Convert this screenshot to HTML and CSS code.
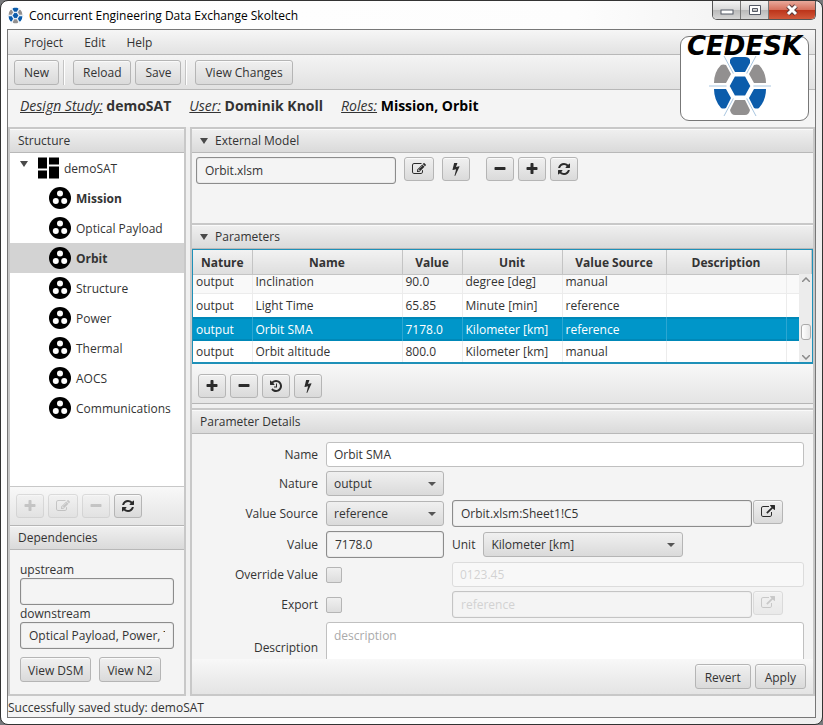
FILE: index.html
```html
<!DOCTYPE html>
<html lang="en">
<head>
    <meta charset="UTF-8">
    <meta name="viewport" content="width=device-width, initial-scale=1.0">
    <title>Concurrent Engineering Data Exchange Skoltech</title>
    <link rel="stylesheet" href="styles.css">
</head>
<body>
    <!-- shared icons -->
    <svg class="sprite" aria-hidden="true">
        <symbol id="plus" viewBox="0 0 1792 1792"><path d="M1600 736v192q0 40-28 68t-68 28h-416v416q0 40-28 68t-68 28h-192q-40 0-68-28t-28-68v-416h-416q-40 0-68-28t-28-68v-192q0-40 28-68t68-28h416v-416q0-40 28-68t68-28h192q40 0 68 28t28 68v416h416q40 0 68 28t28 68z"/></symbol>
        <symbol id="minus" viewBox="0 0 1792 1792"><path d="M1600 736v192q0 40-28 68t-68 28h-1216q-40 0-68-28t-28-68v-192q0-40 28-68t68-28h1216q40 0 68 28t28 68z"/></symbol>
        <symbol id="bolt" viewBox="0 0 1792 1792"><path d="M1333 566q18 20 7 44l-540 1157q-13 25-42 25-4 0-14-2-17-5-25.500-19t-4.500-30l197-808-406 101q-4 1-12 1-18 0-31-11-18-15-13-39l201-825q4-14 16-23t28-9h328q19 0 32 12.500t13 29.500q0 8-5 18l-171 463 396-98q8-2 12-2 19 0 34 15z"/></symbol>
        <symbol id="refresh" viewBox="0 0 1792 1792"><path d="M1639 1056q0 5-1 7-64 268-268 434.500t-478 166.500q-146 0-282.500-55t-243.500-157l-129 129q-19 19-45 19t-45-19-19-45v-448q0-26 19-45t45-19h448q26 0 45 19t19 45-19 45l-137 137q71 66 161 102t187 36q134 0 250-65t186-179q11-17 53-117 8-23 30-23h192q13 0 22.500 9.500t9.500 22.500zm25-800v448q0 26-19 45t-45 19h-448q-26 0-45-19t-19-45 19-45l138-138q-148-137-349-137-134 0-250 65t-186 179q-11 17-53 117-8 23-30 23h-199q-13 0-22.500-9.500t-9.500-22.500v-7q65-268 270-434.500t480-166.500q146 0 284 55.500t245 156.500l130-129q19-19 45-19t45 19 19 45z"/></symbol>
        <symbol id="history" viewBox="0 0 1792 1792"><path d="M1664 896q0 156-61 298t-164 245-245 164-298 61q-172 0-327-72.500t-264-204.500q-7-10-6.500-22.500t8.500-20.500l137-138q10-9 25-9 16 2 23 12 73 95 179 147t225 52q104 0 198.500-40.500t163.500-109.500 109.500-163.500 40.500-198.500-40.500-198.500-109.500-163.500-163.500-109.500-198.500-40.500q-98 0-188 35.500t-160 101.500l137 138q31 30 14 69-17 40-59 40h-448q-26 0-45-19t-19-45v-448q0-42 40-59 39-17 69 14l130 129q107-101 244.500-156.500t284.500-55.500q156 0 298 61t245 164 164 245 61 298zm-640-288v448q0 14-9 23t-23 9h-320q-14 0-23-9t-9-23v-64q0-14 9-23t23-9h224v-352q0-14 9-23t23-9h64q14 0 23 9t9 23z"/></symbol>
        <symbol id="edit" viewBox="0 0 1792 1792"><path d="M888 1184l116-116-152-152-116 116v56h96v96h56zm440-720q-16-16-33 1l-350 350q-17 17-1 33t33-1l350-350q17-17 1-33zm80 594v190q0 119-84.500 203.500t-203.500 84.500h-832q-119 0-203.500-84.500t-84.500-203.500v-832q0-119 84.500-203.500t203.500-84.500h832q63 0 117 25 15 7 18 23 3 17-9 29l-49 49q-14 14-32 8-23-6-45-6h-832q-66 0-113 47t-47 113v832q0 66 47 113t113 47h832q66 0 113-47t47-113v-126q0-13 9-22l64-64q15-15 35-7t20 29zm-96-738l288 288-672 672h-288v-288zm444 132l-92 92-288-288 92-92q28-28 68-28t68 28l152 152q28 28 28 68t-28 68z"/></symbol>
        <symbol id="link" viewBox="0 0 1792 1792"><path d="M1408 928v320q0 119-84.500 203.500t-203.500 84.500h-832q-119 0-203.500-84.500t-84.500-203.500v-832q0-119 84.500-203.500t203.500-84.500h704q14 0 23 9t9 23v64q0 14-9 23t-23 9h-704q-66 0-113 47t-47 113v832q0 66 47 113t113 47h832q66 0 113-47t47-113v-320q0-14 9-23t23-9h64q14 0 23 9t9 23zm384-864v512q0 26-19 45t-45 19-45-19l-176-176-652 652q-10 10-23 10t-23-10l-114-114q-10-10-10-23t10-23l652-652-176-176q-19-19-19-45t19-45 45-19h512q26 0 45 19t19 45z"/></symbol>
        <symbol id="node" viewBox="0 0 22 22"><circle cx="11" cy="11" r="11"/><g fill="#fff"><circle cx="11" cy="6.500" r="3"/><circle cx="6.800" cy="14" r="3"/><circle cx="15.200" cy="14" r="3"/></g></symbol>
        <symbol id="board" viewBox="0 0 21 21"><path d="M0 0h9v11H0zM11 0h10v7H11zM0 13h9v8H0zM11 9h10v12H11z"/></symbol>
        <symbol id="cells" viewBox="0 0 64 62">
            <path d="M16 1L48 61M48 1L16 61M1 31H63" stroke="#a9c6e0" stroke-width="1"/>
            <path d="M20 31L26 20H38L44 31L38 42H26Z" fill="#0b5cab" stroke="#fff" stroke-width="3"/>
            <path d="M22 5Q23 2 27 2H37Q41 2 42 5L42 8L37 17H27L22 8Z" fill="#0b5cab"/>
            <path d="M6 34H18L23 43L18 53Q15 54 13 53Q6 45 6 34ZM58 34H46L41 43L46 53Q49 54 51 53Q58 45 58 34Z" fill="#0b5cab"/>
            <path d="M6 28H18L23 19L18 10Q15 9 13 10Q6 17 6 28ZM58 28H46L41 19L46 10Q49 9 51 10Q58 17 58 28ZM22 55L27 45H37L42 55Q41 60 37 60H27Q23 60 22 55Z" fill="#929090"/>
        </symbol>
    </svg>

    <div class="window">
        <header class="titlebar">
            <svg class="app-icon"><use href="#cells"/></svg>
            <span class="title">Concurrent Engineering Data Exchange Skoltech</span>
            <div class="window-buttons">
                <button class="win-btn" aria-label="Minimize"><svg width="14" height="12"><rect x="1" y="6" width="12" height="4" fill="#fff" stroke="#555a66"/></svg></button>
                <button class="win-btn" aria-label="Maximize"><svg width="14" height="12"><path d="M1.500 1.500h11v9h-11zM4.500 4.500h5v3h-5z" fill="#fff" fill-rule="evenodd" stroke="#555a66"/></svg></button>
                <button class="win-btn close" aria-label="Close"><svg width="14" height="12"><path d="M3 2L11 10M11 2L3 10" stroke="#5a3a3a" stroke-width="5"/><path d="M3 2L11 10M11 2L3 10" stroke="#fff" stroke-width="3"/></svg></button>
            </div>
        </header>

        <div class="client">
            <nav class="menubar">
                <a href="#">Project</a>
                <a href="#">Edit</a>
                <a href="#">Help</a>
            </nav>
            <div class="toolbar">
                <button class="btn">New</button>
                <span class="separator"></span>
                <button class="btn">Reload</button>
                <button class="btn">Save</button>
                <span class="separator"></span>
                <button class="btn">View Changes</button>
            </div>
            <div class="study-info">
                <span><em>Design Study:</em> <b>demoSAT</b></span>
                <span><em>User:</em> <b>Dominik Knoll</b></span>
                <span class="roles"><em>Roles:</em> <b>Mission, Orbit</b></span>
            </div>
            <div class="logo">
                <span class="logo-text">CEDESK</span>
                <svg class="logo-cells"><use href="#cells"/></svg>
            </div>

            <main class="split">
                <aside class="side">
                    <h2 class="pane-title">Structure</h2>
                    <ul class="tree">
                        <li class="root"><span class="arrow"></span><svg><use href="#board"/></svg>demoSAT</li>
                        <li class="own"><svg><use href="#node"/></svg>Mission</li>
                        <li><svg><use href="#node"/></svg>Optical Payload</li>
                        <li class="own selected"><svg><use href="#node"/></svg>Orbit</li>
                        <li><svg><use href="#node"/></svg>Structure</li>
                        <li><svg><use href="#node"/></svg>Power</li>
                        <li><svg><use href="#node"/></svg>Thermal</li>
                        <li><svg><use href="#node"/></svg>AOCS</li>
                        <li><svg><use href="#node"/></svg>Communications</li>
                    </ul>
                    <div class="button-bar">
                        <button class="btn icon" aria-label="Add" disabled><svg><use href="#plus"/></svg></button>
                        <button class="btn icon large" aria-label="Rename" disabled><svg><use href="#edit"/></svg></button>
                        <button class="btn icon" aria-label="Remove" disabled><svg><use href="#minus"/></svg></button>
                        <button class="btn icon" aria-label="Refresh"><svg><use href="#refresh"/></svg></button>
                    </div>
                    <h2 class="pane-title">Dependencies</h2>
                    <div class="dependencies">
                        <label for="upstream">upstream</label>
                        <input class="readonly" id="upstream" type="text" readonly>
                        <label for="downstream">downstream</label>
                        <input class="readonly" id="downstream" type="text" value="Optical Payload, Power, Thermal" readonly>
                        <div class="view-buttons">
                            <button class="btn">View DSM</button>
                            <button class="btn">View N2</button>
                        </div>
                    </div>
                </aside>

                <section class="content">
                    <h2 class="pane-title"><span class="arrow"></span>External Model</h2>
                    <div class="external">
                        <input class="readonly" type="text" value="Orbit.xlsm" aria-label="External model file" readonly>
                        <button class="btn icon large" aria-label="Edit model"><svg><use href="#edit"/></svg></button>
                        <button class="btn icon" aria-label="Update from model"><svg><use href="#bolt"/></svg></button>
                        <div class="btn-group">
                            <button class="btn icon" aria-label="Detach model"><svg><use href="#minus"/></svg></button>
                            <button class="btn icon" aria-label="Attach model"><svg><use href="#plus"/></svg></button>
                            <button class="btn icon" aria-label="Reload model"><svg><use href="#refresh"/></svg></button>
                        </div>
                    </div>

                    <h2 class="pane-title"><span class="arrow"></span>Parameters</h2>
                    <div class="table-box">
                        <table class="parameters">
                            <colgroup>
                                <col class="c-nature"><col class="c-name"><col class="c-value"><col class="c-unit"><col class="c-source"><col class="c-desc"><col>
                            </colgroup>
                            <thead>
                                <tr><th>Nature</th><th>Name</th><th>Value</th><th>Unit</th><th>Value Source</th><th>Description</th><th></th></tr>
                            </thead>
                            <tbody>
                                <tr class="cut"><td>output</td><td>Inclination</td><td>90.0</td><td>degree [deg]</td><td>manual</td><td></td><td></td></tr>
                                <tr><td>output</td><td>Light Time</td><td>65.85</td><td>Minute [min]</td><td>reference</td><td></td><td></td></tr>
                                <tr class="selected"><td>output</td><td>Orbit SMA</td><td>7178.0</td><td>Kilometer [km]</td><td>reference</td><td></td><td></td></tr>
                                <tr><td>output</td><td>Orbit altitude</td><td>800.0</td><td>Kilometer [km]</td><td>manual</td><td></td><td></td></tr>
                            </tbody>
                        </table>
                        <div class="scrollbar">
                            <svg width="8" height="5"><path d="M0 5L4 1L8 5" fill="none" stroke="#8a8a8a" stroke-width="1.500"/></svg>
                            <span class="thumb"></span>
                            <svg width="8" height="5"><path d="M0 0L4 4L8 0" fill="none" stroke="#8a8a8a" stroke-width="1.500"/></svg>
                        </div>
                    </div>
                    <div class="button-bar">
                        <button class="btn icon" aria-label="Add parameter"><svg><use href="#plus"/></svg></button>
                        <button class="btn icon" aria-label="Delete parameter"><svg><use href="#minus"/></svg></button>
                        <button class="btn icon" aria-label="History"><svg><use href="#history"/></svg></button>
                        <button class="btn icon" aria-label="Recalculate"><svg><use href="#bolt"/></svg></button>
                    </div>
                    <div class="divider"></div>

                    <h2 class="pane-title">Parameter Details</h2>
                    <form class="details">
                        <label for="name">Name</label>
                        <input class="wide" id="name" type="text" value="Orbit SMA">

                        <label for="nature">Nature</label>
                        <span class="combo"><select id="nature"><option>output</option></select></span>
                        <span></span>

                        <label for="source">Value Source</label>
                        <span class="combo"><select id="source"><option>reference</option></select></span>
                        <div class="line">
                            <input class="readonly" type="text" value="Orbit.xlsm:Sheet1!C5" aria-label="Value reference" readonly>
                            <button class="btn icon large" type="button" aria-label="Choose value reference"><svg><use href="#link"/></svg></button>
                        </div>

                        <label for="value">Value</label>
                        <input class="readonly" id="value" type="text" value="7178.0" readonly>
                        <div class="line unit-line">
                            <label for="unit">Unit</label>
                            <span class="combo"><select id="unit"><option>Kilometer [km]</option></select></span>
                        </div>

                        <label for="override">Override Value</label>
                        <input id="override" type="checkbox">
                        <input type="text" placeholder="0123.45" aria-label="Override value" disabled>

                        <label for="export">Export</label>
                        <input id="export" type="checkbox">
                        <div class="line">
                            <input class="readonly" type="text" placeholder="reference" aria-label="Export reference" disabled>
                            <button class="btn icon large" type="button" aria-label="Choose export reference" disabled><svg><use href="#link"/></svg></button>
                        </div>

                        <label for="description">Description</label>
                        <textarea class="wide" id="description" placeholder="description"></textarea>
                    </form>
                    <div class="button-bar actions">
                        <button class="btn">Revert</button>
                        <button class="btn">Apply</button>
                    </div>
                </section>
            </main>
            <footer class="status">Successfully saved study: demoSAT</footer>
        </div>
    </div>
</body>
</html>
```

FILE: styles.css
```css
* {
    box-sizing: border-box;
}
body {
    margin: 0;
    background: #77797c;
    color: #333;
    font-family: "Open Sans", "Noto Sans", sans-serif;
    font-size: 12px;
    line-height: 17px;
}
button, input, select, textarea {
    font: inherit;
    color: inherit;
    margin: 0;
}
.sprite {
    display: none;
}

/* Window frame */
.window {
    display: flex;
    flex-direction: column;
    height: 100vh;
    padding: 0 6px 6px;
    border: 1px solid #333;
    border-radius: 8px;
    background: linear-gradient(to right, #fff, #fdfdfd 70%, #eee);
}
.titlebar {
    display: flex;
    align-items: center;
    height: 28px;
    flex: none;
    gap: 5px;
    color: #000;
}
.app-icon {
    width: 17px;
    height: 17px;
}
.title {
    flex: 1;
}
.window-buttons {
    display: flex;
    align-self: flex-start;
    height: 19px;
    border: 1px solid #555;
    border-top: 0;
    border-radius: 0 0 5px 5px;
    overflow: hidden;
}
.win-btn {
    display: flex;
    align-items: center;
    justify-content: center;
    width: 28px;
    padding: 0;
    border: 0;
    border-right: 1px solid #777;
    background: linear-gradient(#f4f4f4, #d8d8d8 48%, #b9b9b9 50%, #d6d6d6);
}
.win-btn.close {
    width: 46px;
    border: 0;
    background: linear-gradient(#e9a99b, #d6705c 48%, #bb3319 50%, #d1593b);
}
.client {
    position: relative;
    display: flex;
    flex-direction: column;
    flex: 1;
    min-height: 0;
    border: 1px solid #777;
    background: #f4f4f4;
}

/* Menu, toolbar and study line */
.menubar {
    display: flex;
    flex: none;
    gap: 21px;
    height: 25px;
    padding: 4px 16px;
    border-bottom: 1px solid #b8b8b8;
    background: linear-gradient(#f6f6f6, #e2e2e2);
}
.menubar a {
    color: inherit;
    text-decoration: none;
}
.toolbar {
    display: flex;
    flex: none;
    align-items: center;
    gap: 4px;
    height: 35px;
    padding: 0 6px;
    border-bottom: 1px solid #b8b8b8;
    background: linear-gradient(#f4f4f4, #e1e1e1);
}
.separator {
    width: 2px;
    height: 25px;
    margin-right: 4px;
    border-left: 1px solid #c4c4c4;
    background: #fff;
}
.btn {
    height: 25px;
    padding: 1px 9px 0;
    border: 1px solid #b5b5b5;
    border-radius: 3px;
    background: linear-gradient(#f0f0f0, #dadada);
    box-shadow: inset 0 1px #fafafa;
    white-space: nowrap;
}
.btn.icon {
    display: flex;
    align-items: center;
    justify-content: center;
    flex: none;
    width: 28px;
    height: 24px;
    padding: 0;
}
.btn.large {
    width: 30px;
}
.btn svg {
    width: 14px;
    height: 14px;
    fill: #2b2b2b;
}
.btn:disabled {
    opacity: 0.4;
}
.btn:disabled svg {
    opacity: 0.5;
}
.study-info {
    display: flex;
    flex: none;
    gap: 18px;
    height: 37px;
    padding: 6px 12px;
    font-size: 14px;
    line-height: 20px;
}
.study-info em {
    text-decoration: underline;
}
.roles b {
    color: #000;
}
.logo {
    position: absolute;
    top: 6px;
    right: 6px;
    display: flex;
    flex-direction: column;
    align-items: center;
    width: 129px;
    height: 85px;
    border: 1px solid #777;
    border-radius: 9px;
    background: #fff;
}
.logo-text {
    color: #000;
    font: italic bold 26px/18px "DejaVu Sans", sans-serif;
}
.logo-cells {
    width: 64px;
    height: 62px;
    margin-right: 10px;
}

/* Split panes */
.split {
    display: flex;
    flex: 1;
    min-height: 0;
    gap: 4px;
    background: #f0f0f0;
}
.side, .content {
    display: flex;
    flex-direction: column;
    min-height: 0;
    border: 2px solid #c8c8c8;
    background: #f4f4f4;
}
.side {
    flex: none;
    width: 178px;
}
.content {
    flex: 1;
    min-width: 0;
}
.pane-title {
    display: flex;
    align-items: center;
    flex: none;
    gap: 7px;
    height: 24px;
    margin: 0;
    padding: 0 8px;
    border-bottom: 1px solid #b8b8b8;
    background: linear-gradient(#f0f0f0, #dadada);
    box-shadow: inset 0 1px #fafafa;
    font-size: 12px;
    font-weight: normal;
}
.arrow {
    border: 4px solid transparent;
    border-top: 6px solid #4a4a4a;
    border-bottom: 0;
}
.tree {
    flex: 1;
    min-height: 0;
    margin: 0;
    padding: 0;
    overflow: hidden;
    background: #fff;
    list-style: none;
}
.tree li {
    display: flex;
    align-items: center;
    gap: 5px;
    height: 30px;
    padding-left: 39px;
}
.tree .root {
    padding-left: 10px;
}
.root .arrow {
    margin: 0 5px 8px 0;
}
.tree svg {
    width: 22px;
    height: 22px;
}
.tree .root svg {
    width: 21px;
}
.tree .own {
    font-weight: bold;
}
.tree .selected {
    background: #d3d3d3;
}
.button-bar {
    display: flex;
    align-items: center;
    flex: none;
    gap: 4px;
    height: 40px;
    padding: 0 6px;
    border-top: 1px solid #c8c8c8;
    border-bottom: 1px solid #b5b5b5;
    background: linear-gradient(#f8f8f8, #e4e4e4);
}
.dependencies {
    display: flex;
    flex-direction: column;
    flex: none;
    height: 144px;
    padding: 11px 10px;
}
.view-buttons {
    display: flex;
    gap: 8px;
    margin-top: 8px;
}
.view-buttons .btn {
    padding: 1px 7px 0;
}

/* Form controls */
input[type="text"], textarea, select {
    width: 100%;
    min-width: 0;
    height: 25px;
    padding: 0 7px;
    border: 1px solid #c0c0c0;
    border-radius: 3px;
    background: #fff;
}
input[type="text"].readonly {
    height: 27px;
    padding: 0 8px;
    border-color: #8c8c8c;
    background: #f4f4f4;
    box-shadow: inset 0 0 1px #8c8c8c;
}
input[type="text"]:disabled {
    opacity: 0.45;
}
::placeholder {
    color: #aaa;
    opacity: 1;
}
.combo {
    position: relative;
    display: block;
    height: 25px;
}
.combo::after {
    content: "";
    position: absolute;
    top: 11px;
    right: 8px;
    border: 4px solid transparent;
    border-top-color: #555;
    border-bottom: 0;
    pointer-events: none;
}
select {
    appearance: none;
    border-color: #b5b5b5;
    background: linear-gradient(#f0f0f0, #dadada);
}
input[type="checkbox"] {
    appearance: none;
    width: 16px;
    height: 16px;
    border: 1px solid #b5b5b5;
    border-radius: 2px;
    background: linear-gradient(#f0f0f0, #dddddd);
}
.external {
    display: flex;
    flex: none;
    gap: 8px;
    height: 72px;
    padding: 4px;
    border-bottom: 2px solid #c8c8c8;
}
.external input[type="text"] {
    width: 200px;
}
.btn-group {
    display: flex;
    gap: 4px;
    margin-left: 8px;
}

/* Parameter table */
.table-box {
    position: relative;
    flex: none;
    border: 2px solid #1e90b8;
    border-width: 1px 1px 2px;
    background: #fff;
}
.parameters {
    width: 100%;
    border-collapse: collapse;
    table-layout: fixed;
}
.c-nature {
    width: 59px;
}
.c-value {
    width: 60px;
}
.c-name {
    width: 150px;
}
.c-unit {
    width: 100px;
}
.c-source {
    width: 104px;
}
.c-desc {
    width: 120px;
}
.parameters th, .parameters td {
    height: 24px;
    padding: 0 3px;
    border-right: 1px solid #ececec;
    text-align: left;
    white-space: nowrap;
}
.parameters th {
    padding-top: 2px;
    border-right-color: #c4c4c4;
    border-bottom: 1px solid #c4c4c4;
    background: linear-gradient(#f2f2f2, #dedede);
    text-align: center;
}
.parameters .cut td {
    height: 18px;
    padding-bottom: 4px;
    border-bottom: 1px solid #ececec;
    background: #f9f9f9;
    line-height: 14px;
}
.parameters tr:last-child td {
    height: 21px;
}
.parameters .selected td {
    border-right-color: #2ca6d2;
    background: #0096c9;
    box-shadow: inset 0 2px #0088b8, inset 0 -2px #0088b8;
    color: #fff;
}
.scrollbar {
    position: absolute;
    top: 24px;
    right: 0;
    bottom: 0;
    display: flex;
    flex-direction: column;
    align-items: center;
    width: 13px;
    padding: 3px 0 2px;
    background: #ececec;
}
.thumb {
    width: 10px;
    height: 16px;
    margin: 42px 0 auto;
    border: 1px solid #aaa;
    border-radius: 3px;
    background: linear-gradient(to right, #fff, #e6e6e6);
}
.content .button-bar {
    height: 40px;
    padding-top: 4px;
    border-top: 0;
}
.divider {
    flex: none;
    height: 6px;
    border-bottom: 2px solid #c8c8c8;
    background: #f0f0f0;
}

/* Parameter details */
.details {
    display: grid;
    grid-template-columns: 126px 118px 1fr;
    align-content: start;
    align-items: center;
    gap: 4px 8px;
    flex: 1;
    min-height: 0;
    padding: 8px 9px 0 0;
    overflow: hidden;
}
.details > label {
    text-align: right;
}
.wide {
    grid-column: span 2;
}
.line {
    display: flex;
    gap: 1px;
}
.line input[type="text"] {
    width: 300px;
}
.unit-line {
    align-items: center;
    gap: 8px;
}
.unit-line .combo {
    width: 200px;
}
.details textarea {
    display: block;
    height: 51px;
    padding: 4px 7px;
    resize: none;
}
.content .actions {
    justify-content: flex-end;
    height: 35px;
    padding: 0 7px;
    border-bottom: 0;
}
.status {
    flex: none;
    height: 21px;
    padding: 3px 0;
}
```
